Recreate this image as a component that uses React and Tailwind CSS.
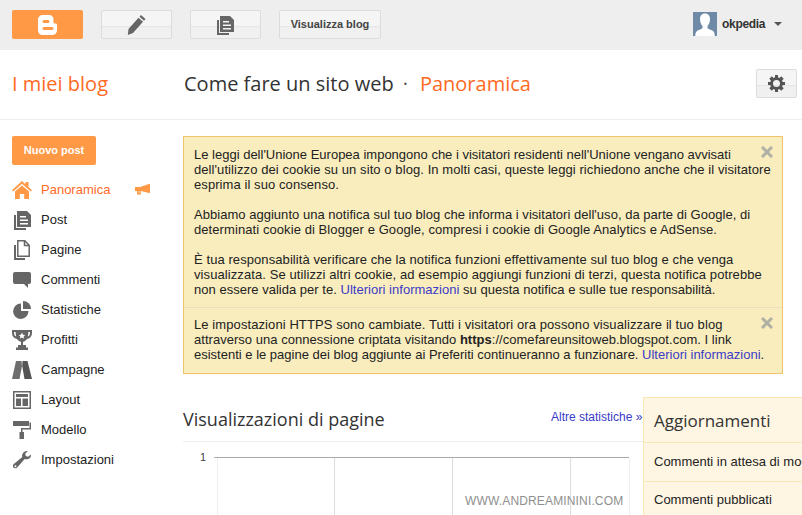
const G = "#666";

const Logo = () => (
  <svg width="20" height="20" viewBox="0 0 20 20"><path fill="#fff" fillRule="evenodd" d="M5 0h6c3 0 4.500 2 4.500 4.500V7c0 1 .5 1.500 2 1.500 1 0 1.500.5 1.500 1.500v5c0 3-2 5-5 5H5c-3 0-5-2-5-5V5c0-3 2-5 5-5zm1 5a1.300 1.300 0 0 0 0 3h4a1.300 1.300 0 0 0 0-3zm0 7a1.300 1.300 0 0 0 0 3h8a1.300 1.300 0 0 0 0-3z" /></svg>
);
const Pencil = () => (
  <svg width="19" height="20" viewBox="0 0 19 20"><path fill={G} d="M14 0l4.500 4-1.500 1.800-4.500-4zM11.500 2.800L16 6.800 6 18 .8 20 1.500 14z" /></svg>
);
const Docs = ({ size = 17 }) => (
  <svg width={size} height={size * 20 / 17} viewBox="0 0 17 20"><path fill={G} d="M0 5h2v13h10v2H0z" /><path fill={G} fillRule="evenodd" d="M3 1h10l4 4v12H3zm3 5v1.500h6V6zm0 3.500V11h8V9.500zm0 3.500v1.500h8V13z" /></svg>
);
const Pages = () => (
  <svg width="16" height="20" viewBox="0 0 16 20"><path fill={G} d="M0 5h2v13h9v2H0z" /><path fill="none" stroke={G} strokeWidth="1.500" d="M3.800.8h7l4.400 4.400v11H3.800zM10.500 1v4.500h4.500" /></svg>
);
const Home = () => (
  <svg width="20" height="18" viewBox="0 0 20 18"><path fill="#ff9945" d="M10 0l3.500 3.200V1h3v5l3.500 3.300-1.300 1.200L10 2.800 1.300 10.500 0 9.300zM10 4.500l7 6V18h-4.800v-5H7.800v5H3v-7.500z" /></svg>
);
const Megaphone = () => (
  <svg width="15" height="11" viewBox="0 0 15 11"><path fill="#ff9945" d="M0 3h5l9-3h1v9h-1L6 7v3.500H2V7H0z" /><path fill="#fff" d="M3.500 7.500h2v1h-2z" /></svg>
);
const Comment = () => (
  <svg width="18" height="16" viewBox="0 0 18 16"><path fill={G} d="M2 0h14a2 2 0 0 1 2 2v8a2 2 0 0 1-2 2h-1v4l-4-4H2a2 2 0 0 1-2-2V2a2 2 0 0 1 2-2z" /></svg>
);
const Pie = () => (
  <svg width="18" height="18" viewBox="0 0 18 18"><path fill={G} d="M8 2.500V10h7.500A7.700 7.700 0 1 1 8 2.500z" /><path fill={G} d="M10 0a8 8 0 0 1 8 8h-8z" /></svg>
);
const Trophy = () => (
  <svg width="20" height="20" viewBox="0 0 20 20"><path fill={G} fillRule="evenodd" d="M0 0h20v3c0 3-2 5.500-5 6-1 1.500-2.500 2.500-4 2.800V15h3v2.500H16V20H4v-2.500h2V15h3v-3.200C7.500 11.500 6 10.500 5 9 2 8.500 0 6 0 3zm2 2v1c0 1.500.8 3 2.200 3.500C3.800 5.200 3.700 3.500 3.600 2zm16 0h-1.600c-.1 1.500-.2 3.200-.6 4.500C17.200 6 18 4.500 18 3zM10 2.500l-1 2.200-2.300.2 1.700 1.500-.5 2.300 2.100-1.200 2.100 1.200-.5-2.300 1.700-1.500-2.300-.2z" /></svg>
);
const Ads = () => (
  <svg width="20" height="18" viewBox="0 0 20 18"><path fill="#6e6e6e" d="M4 0H9.500L10 5 7.500 18H0z" /><path fill="#555" d="M10.500 0H15.500L20 18H12.500L10.200 5z" /></svg>
);
const LayoutIcon = () => (
  <svg width="18" height="18" viewBox="0 0 18 18"><path fill={G} fillRule="evenodd" d="M0 0h18v18H0zm1.500 1.500v15h15v-15zM3 3h12v3H3zm0 4.500h5V15H3zm6.500 0H15V15H9.500z" /></svg>
);
const Roller = () => (
  <svg width="18" height="18" viewBox="0 0 18 18"><path fill={G} d="M0 0h16v5H0zM16.500 1.500H18V8.500H9.500V11H11v7H6.500v-7H8V7h8.500z" /></svg>
);
const Wrench = () => (
  <svg width="18" height="18" viewBox="0 0 18 18"><path fill={G} fillRule="evenodd" d="M18 3.500c.4 2.500-1.800 5-4.500 4.800-.8 0-1.300-.2-1.800-.4l-7.500 8.500c-1 1.200-2.700 1.200-3.700.2-1-1-.8-2.600.3-3.500l8.500-7c-.3-.8-.3-1.700 0-2.500C10.100 1.100 12.300-.4 14.800.1l-2.600 2.700.6 2.300 2.300.6zM2.500 14.200a1 1 0 1 0 0 2 1 1 0 0 0 0-2z" /></svg>
);
const Gear = () => (
  <svg width="17" height="17" viewBox="0 0 17 17"><path fill="#555" fillRule="evenodd" d="M7 0h3v2.300l1.500.6L13.200 1.300l2.500 2.500-1.600 1.700.6 1.500H17v3h-2.300l-.6 1.500 1.600 1.700-2.500 2.500-1.700-1.600-1.500.6V17H7v-2.300l-1.500-.6-1.700 1.600-2.500-2.500 1.600-1.700-.6-1.500H0v-3h2.300l.6-1.500-1.600-1.700 2.500-2.500 1.700 1.600L7 2.300zm1.500 5a3.500 3.500 0 1 0 0 7 3.500 3.500 0 0 0 0-7z" /></svg>
);
const Close = () => (
  <svg width="12" height="12" viewBox="0 0 12 12"><path stroke="#b0b0a4" strokeWidth="3" d="M1 1l10 10M11 1L1 11" /></svg>
);
const Avatar = () => (
  <svg width="24" height="24" viewBox="0 0 24 24"><rect width="24" height="24" fill="#6f8aa6" /><path fill="#fff" d="M12 1.500c3.500 0 5 2.500 5 5.500 0 3-1 5.500-2.500 7v2c1 1.500 5 2 6 3.500 1 1 1.200 3 1.200 4.500H2.300c0-1.500.2-3.500 1.200-4.500 1-1.500 5-2 6-3.500v-2C8 12.500 7 10 7 7c0-3 1.500-5.500 5-5.500z" /></svg>
);

const GreyBtn = ({ className = "", children }) => (
  <div className={"flex items-center justify-center h-[29px] rounded-[2px] border border-[#dcdcdc] bg-[linear-gradient(#f5f5f5_0,#f5f5f5_55%,#e6e6e6_57%,#f0f0f0_62%,#f1f1f1_100%)] " + className}>{children}</div>
);

const nav = [
  ["Panoramica", Home],
  ["Post", Docs],
  ["Pagine", Pages],
  ["Commenti", Comment],
  ["Statistiche", Pie],
  ["Profitti", Trophy],
  ["Campagne", Ads],
  ["Layout", LayoutIcon],
  ["Modello", Roller],
  ["Impostazioni", Wrench],
];

const Link = ({ children }) => <a className="text-[#3b3bc8]">{children}</a>;
const L = ({ className = "", children }) => <span className={"block whitespace-nowrap " + className}>{children}</span>;

export default function App() {
  return (
    <div className="relative w-[802px] h-[515px] overflow-hidden bg-white font-['Liberation_Sans',Arial,sans-serif] text-[#222]">
      <header className="h-[50px] bg-[#eeeeee] flex items-start pt-[10px] pl-[12px]">
        <div className="w-[71px] h-[29px] rounded-[2px] bg-[#ff9945] flex items-center justify-center"><Logo /></div>
        <GreyBtn className="w-[71px] ml-[18px]"><Pencil /></GreyBtn>
        <GreyBtn className="w-[71px] ml-[18px]"><Docs /></GreyBtn>
        <GreyBtn className="w-[102px] ml-[18px] text-[11px] font-bold text-[#444]">Visualizza blog</GreyBtn>
        <div className="ml-auto flex items-center h-[26px] pt-[1px] mr-[20px]">
          <Avatar />
          <span className="ml-[5px] text-[12px] font-bold text-[#333] w-[52px] tracking-[-0.3px]">okpedia</span>
          <span className="w-0 h-0 border-x-[4px] border-x-transparent border-t-[4px] border-t-[#555] mt-[1px]"></span>
        </div>
      </header>

      <div className="h-[70px] border-b border-[#eeeeee] flex items-start font-['Open_Sans',sans-serif]">
        <div className="w-[183px] pl-[12px] pt-[20px] text-[20px] leading-[28px] text-[#ff6a1f]">I miei blog</div>
        <div className="pl-[1px] pt-[20px] text-[20px] leading-[28px] text-[#333]">
          Come fare un sito web<span className="ml-[9px] mr-[12px] text-[#555]">·</span><span className="text-[#ff6a1f]">Panoramica</span>
        </div>
        <GreyBtn className="ml-auto mt-[19px] mr-[5px] w-[41px] !h-[29px]"><Gear /></GreyBtn>
      </div>

      <div className="flex items-start">
        <aside className="w-[183px] shrink-0 pt-[16px] pl-[12px]">
          <div className="w-[84px] h-[29px] rounded-[2px] bg-[#ff9945] flex items-center justify-center text-[11px] font-bold text-white">Nuovo post</div>
          <nav className="mt-[9px]">
            {nav.map(([label, Icon], i) => (
              <div key={label} className={"h-[30px] flex items-center text-[13px] pt-[1px] " + (i === 0 ? "text-[#ff6a1f]" : "text-[#222]")}>
                <span className="w-[29px] flex justify-start"><span className="w-[20px] flex justify-center"><Icon /></span></span>
                <span className="flex-1">{label}</span>
                {i === 0 && <span className="mr-[33px]"><Megaphone /></span>}
              </div>
            ))}
          </nav>
        </aside>

        <main className="flex-1 min-w-0 pt-[16px]">
          <div className="w-[600px] border border-[#f0c36d] bg-[#f9edbe] text-[13px] leading-[15px] text-[#222]">
            <div className="relative px-[10px] pt-[10px] h-[170px]">
              <span className="absolute right-[9px] top-[9px]"><Close /></span>
              <p>
                <L>Le leggi dell'Unione Europea impongono che i visitatori residenti nell'Unione vengano avvisati</L>
                <L className="tracking-[0.08px]">dell'utilizzo dei cookie su un sito o blog. In molti casi, queste leggi richiedono anche che il visitatore</L>
                <L className="tracking-[0.08px]">esprima il suo consenso.</L>
              </p>
              <p className="mt-[15px]">
                <L className="tracking-[0.03px]">Abbiamo aggiunto una notifica sul tuo blog che informa i visitatori dell'uso, da parte di Google, di</L>
                <L className="tracking-[0.08px]">determinati cookie di Blogger e Google, compresi i cookie di Google Analytics e AdSense.</L>
              </p>
              <p className="mt-[15px]">
                <L className="tracking-[0.08px]">È tua responsabilità verificare che la notifica funzioni effettivamente sul tuo blog e che venga</L>
                <L className="tracking-[0.09px]">visualizzata. Se utilizzi altri cookie, ad esempio aggiungi funzioni di terzi, questa notifica potrebbe</L>
                <L className="tracking-[0.02px]">non essere valida per te. <Link>Ulteriori informazioni</Link> su questa notifica e sulle tue responsabilità.</L>
              </p>
            </div>
            <div className="relative border-t border-[#e6dfc4] px-[10px] pt-[9px] h-[66px]">
              <span className="absolute right-[9px] top-[9px]"><Close /></span>
              <p>
                <L className="tracking-[0.09px]">Le impostazioni HTTPS sono cambiate. Tutti i visitatori ora possono visualizzare il tuo blog</L>
                <L className="tracking-[0.03px]">attraverso una connessione criptata visitando <b>https</b>://comefareunsitoweb.blogspot.com. I link</L>
                <L>esistenti e le pagine dei blog aggiunte ai Preferiti continueranno a funzionare. <Link>Ulteriori informazioni</Link>.</L>
              </p>
            </div>
          </div>

          <div className="mt-[23px] h-[45px] w-[619px] border-b border-[#eeeeee] flex items-start">
            <h2 className="font-['Open_Sans',sans-serif] text-[18px] leading-[44px] h-[44px] text-[#333]">Visualizzazioni di pagine</h2>
          </div>

          <svg width="460" height="74" viewBox="0 0 460 74" className="block" fontFamily="'Liberation Sans', sans-serif">
            <text x="17" y="19" fontSize="11" fill="#444">1</text>
            <path d="M31 15.500H446" stroke="#aaa" />
            <path d="M34.500 16V74M446.500 16V74" stroke="#eee" />
            <path d="M151.500 16V74M269.500 16V74M387.500 16V74" stroke="#ddd" />
          </svg>
        </main>
      </div>

      <a className="absolute left-[551px] top-[410px] text-[12px] leading-[14px] text-[#3b3bc8]">Altre statistiche »</a>

      <section className="absolute left-[643px] top-[397px] w-[159px] h-[118px] bg-[#fef6e2] border-l border-t border-[#f9e8b4]">
        <div className="h-[45px] px-[10px] border-b border-[#f9e8b4] font-['Open_Sans',sans-serif] text-[17px] leading-[45px] text-[#333] whitespace-nowrap">Aggiornamenti</div>
        <div className="h-[39px] px-[10px] border-b border-[#f9e8b4] text-[13px] leading-[38px] whitespace-nowrap overflow-hidden">Commenti in attesa di moderazione</div>
        <div className="px-[10px] text-[13px] leading-[36px] whitespace-nowrap">Commenti pubblicati</div>
      </section>

      <div className="absolute left-[465px] top-[494px] text-[12px] leading-[14px] text-[#8f8f8f] tracking-[0.15px]">WWW.ANDREAMININI.COM</div>
    </div>
  );
}
